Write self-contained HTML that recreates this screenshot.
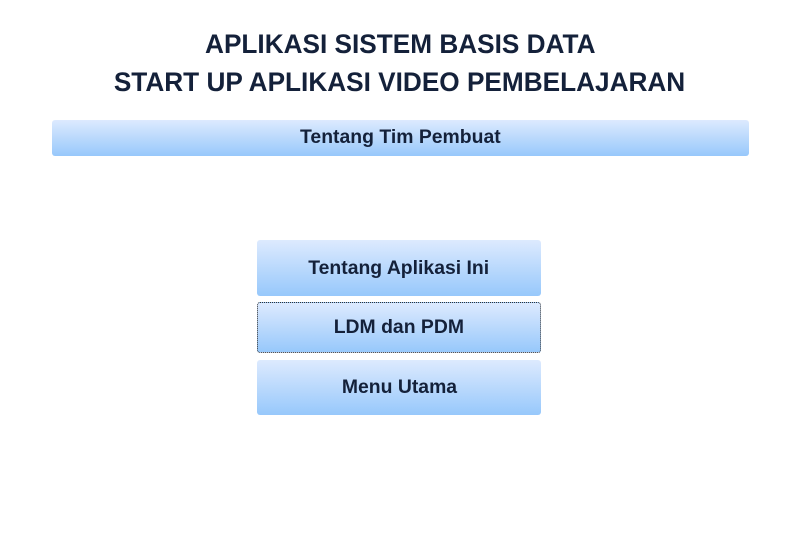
<!DOCTYPE html>
<html><head><style>
body{margin:0;width:800px;height:534px;background:#fff;font-family:"Liberation Sans",sans-serif;font-weight:bold;color:#14213a;position:relative;overflow:hidden}
.t{position:absolute;left:0;width:800px;text-align:center;font-size:27px;line-height:32px}
.t span{display:inline-block;transform:scaleX(0.97)}
.b{position:absolute;background:linear-gradient(#ddeafe,#97c8fb);border-radius:3px;text-align:center;font-size:19px}
.b span{display:inline-block;transform:scaleX(1.02)}
</style></head><body>
<div class="t" style="top:28px"><span>APLIKASI SISTEM BASIS DATA</span></div>
<div class="t" style="top:66px"><span>START UP APLIKASI VIDEO PEMBELAJARAN</span></div>
<div class="b" style="left:52px;top:120px;width:697px;height:36px;line-height:36px"><span>Tentang Tim Pembuat</span></div>
<div class="b" style="left:257px;top:240px;width:284px;height:56px;line-height:57px"><span>Tentang Aplikasi Ini</span></div>
<div class="b" style="left:257px;top:302px;width:282px;height:49px;line-height:49px;border:1px dotted #333"><span>LDM dan PDM</span></div>
<div class="b" style="left:257px;top:360px;width:284px;height:55px;line-height:55px"><span>Menu Utama</span></div>
</body></html>
